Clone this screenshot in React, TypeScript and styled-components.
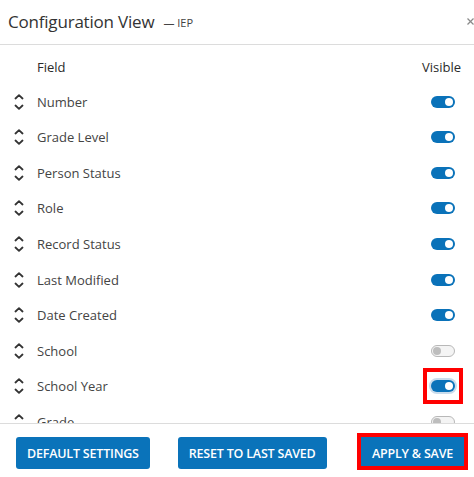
import React from "react";
import styled, { createGlobalStyle, css } from "styled-components";

const Global = createGlobalStyle`
  html, body { margin: 0; padding: 0; background: #fff; }
  body { font-family: "Open Sans", "Noto Sans", sans-serif; color: #333; }
  * { box-sizing: border-box; }
`;

const Dialog = styled.div`
  width: 474px;
  height: 477px;
  display: flex;
  flex-direction: column;
  background: #fff;
  overflow: hidden;
`;

const Header = styled.header`
  height: 45px;
  flex: none;
  display: flex;
  align-items: center;
  padding: 0 0 2px 8px;
  border-bottom: 1px solid #dcdcdc;
`;

const Title = styled.h2`
  margin: 0;
  font-size: 17px;
  font-weight: 400;
  color: #333;
  letter-spacing: -0.2px;
`;

const Sub = styled.span`
  margin-left: 9px;
  margin-top: 3px;
  font-size: 11px;
  color: #444;
`;

const Close = styled.button`
  margin-left: auto;
  width: 10px;
  height: 12px;
  padding: 0;
  border: 0;
  background: none;
  display: flex;
  align-items: center;
  justify-content: flex-end;
  cursor: pointer;
`;

const Body = styled.div`
  flex: 1;
  overflow: hidden;
  padding: 5px 13px 0 13px;
`;

const Row = styled.div<{ $head?: boolean }>`
  height: ${(p) => (p.$head ? "34px" : "35.56px")};
  display: flex;
  align-items: center;
`;

const Handle = styled.span`
  width: 24px;
  flex: none;
  display: flex;
  align-items: center;
  padding-left: 1px;
`;

const Label = styled.span<{ $head?: boolean }>`
  flex: 1;
  font-size: 13px;
  color: ${(p) => (p.$head ? "#2a2a2a" : "#444")};
  font-weight: ${(p) => (p.$head ? 500 : 400)};
  padding-left: ${(p) => (p.$head ? "24px" : "0")};
`;

const VisibleHead = styled.span`
  font-size: 13px;
  font-weight: 500;
  color: #2a2a2a;
`;

const ToggleCell = styled.span`
  width: 36px;
  flex: none;
  display: flex;
  justify-content: flex-end;
  padding-right: 6px;
`;

const Toggle = styled.span<{ $on: boolean; $focus?: boolean; $highlight?: boolean }>`
  position: relative;
  width: 24px;
  height: 12px;
  border-radius: 6px;
  display: block;
  ${(p) =>
    p.$on
      ? css`
          background: #0a72b9;
        `
      : css`
          background: #f4f4f4;
          border: 1px solid #b8b8b8;
        `}
  ${(p) =>
    p.$focus &&
    css`
      box-shadow: 0 0 0 2px #c9dcec;
    `}
  &::before {
    content: "";
    position: absolute;
    top: ${(p) => (p.$on ? "2px" : "1px")};
    left: ${(p) => (p.$on ? "14px" : "1px")};
    width: 8px;
    height: 8px;
    border-radius: 50%;
    background: ${(p) => (p.$on ? "#fff" : "#bdbdbd")};
  }
  ${(p) =>
    p.$highlight &&
    css`
      &::after {
        content: "";
        position: absolute;
        inset: -12px -8px;
        border: 4px solid #f00;
      }
    `}
`;

const Footer = styled.footer`
  height: 54px;
  flex: none;
  border-top: 1px solid #dcdcdc;
  display: flex;
  align-items: flex-start;
  padding: 13px 10px 0 16px;
  gap: 28px;
`;

const Button = styled.button<{ $highlight?: boolean; $end?: boolean }>`
  position: relative;
  height: 32px;
  padding: 0 11px;
  border: 0;
  border-radius: 3px;
  background: #0a73ba;
  color: #fff;
  font-family: "Open Sans", "Noto Sans", sans-serif;
  font-size: 12.5px;
  font-weight: 600;
  letter-spacing: -0.2px;
  text-transform: uppercase;
  cursor: pointer;
  ${(p) =>
    p.$end &&
    css`
      margin-left: auto;
    `}
  ${(p) =>
    p.$highlight &&
    css`
      border-radius: 0;
      &::after {
        content: "";
        position: absolute;
        inset: -4px -4px -1px -4px;
        border: 4px solid #f00;
      }
    `}
`;

const Chevrons = () => (
  <svg width="10" height="16" viewBox="0 0 10 16" fill="none" stroke="#333" strokeWidth="1.8" strokeLinecap="round" strokeLinejoin="round">
    <polyline points="1.5,4.5 5,1.2 8.5,4.5" />
    <polyline points="1.5,11.5 5,14.8 8.5,11.5" />
  </svg>
);

const fields: { name: string; on: boolean; focus?: boolean }[] = [
  { name: "Number", on: true },
  { name: "Grade Level", on: true },
  { name: "Person Status", on: true },
  { name: "Role", on: true },
  { name: "Record Status", on: true },
  { name: "Last Modified", on: true },
  { name: "Date Created", on: true },
  { name: "School", on: false },
  { name: "School Year", on: true, focus: true },
  { name: "Grade", on: false },
];

export default function App() {
  return (
    <>
      <Global />
      <Dialog>
        <Header>
          <Title>Configuration View</Title>
          <Sub>— IEP</Sub>
          <Close aria-label="Close">
            <svg width="7" height="7" viewBox="0 0 7 7" stroke="#8a8a8a" strokeWidth="1.2">
              <line x1="0.5" y1="0.5" x2="6.5" y2="6.5" />
              <line x1="6.5" y1="0.5" x2="0.5" y2="6.5" />
            </svg>
          </Close>
        </Header>
        <Body>
          <Row $head>
            <Label $head>Field</Label>
            <VisibleHead>Visible</VisibleHead>
          </Row>
          {fields.map((f) => (
            <Row key={f.name}>
              <Handle>
                <Chevrons />
              </Handle>
              <Label>{f.name}</Label>
              <ToggleCell>
                <Toggle $on={f.on} $focus={f.focus} $highlight={f.focus} />
              </ToggleCell>
            </Row>
          ))}
        </Body>
        <Footer>
          <Button>Default Settings</Button>
          <Button>Reset to Last Saved</Button>
          <Button $end $highlight>
            Apply &amp; Save
          </Button>
        </Footer>
      </Dialog>
    </>
  );
}
